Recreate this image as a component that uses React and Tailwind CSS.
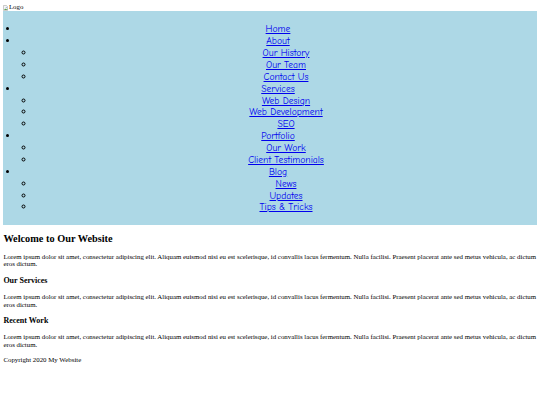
const menu = [
  { label: "Home" },
  { label: "About", children: ["Our History", "Our Team", "Contact Us"] },
  { label: "Services", children: ["Web Design", "Web Development", "SEO"] },
  { label: "Portfolio", children: ["Our Work", "Client Testimonials"] },
  { label: "Blog", children: ["News", "Updates", "Tips & Tricks"] },
];

const lorem =
  "Lorem ipsum dolor sit amet, consectetur adipiscing elit. Aliquam euismod nisi eu est scelerisque, id convallis lacus fermentum. Nulla facilisi. Praesent placerat ante sed metus vehicula, ac dictum eros dictum.";

// broken image placeholder, like the browser draws it
const BrokenLogo = () => (
  <span className="inline-flex items-end gap-[0.5px]">
    <svg width="5" height="6" viewBox="0 0 10 12" className="inline-block">
      <path d="M1 1h6l2 2v8H1z" fill="#f4f4f4" stroke="#9a9a9a" strokeWidth="1" />
      <path d="M2 10l2.5-3 2 2 1.5-1.5L9 10z" fill="#5a9e4b" />
      <circle cx="6.5" cy="4.5" r="1" fill="#4a8fd6" />
    </svg>
    <span>Logo</span>
  </span>
);

export default function App() {
  return (
    <div className="m-[3.4px] font-['Liberation_Serif','Times_New_Roman',serif] text-[6.85px] leading-[7.9px] text-black">
      <header className="h-[7.9px]">
        <BrokenLogo />
      </header>

      <nav className="bg-[#add8e6] pt-[5.6px] pb-[5px] text-center font-['Comic_Sans_MS','Comic_Neue',cursive] text-[9.6px] leading-[11.87px]">
        <ul className="my-[6.4px] list-disc pl-[16px]">
          {menu.map((item) => (
            <li key={item.label}>
              <a href="#" className="text-[#0000ee] underline">
                {item.label}
              </a>
              {item.children && (
                <ul className="list-[circle] pl-[16px]">
                  {item.children.map((c) => (
                    <li key={c}>
                      <a href="#" className="text-[#0000ee] underline">
                        {c}
                      </a>
                    </li>
                  ))}
                </ul>
              )}
            </li>
          ))}
        </ul>
      </nav>

      <main className="font-['Liberation_Serif','Times_New_Roman',serif]">
        <h2 className="my-[8px] text-[10.3px] font-bold leading-[11.9px]">Welcome to Our Website</h2>
        <p className="my-[6.4px]">{lorem}</p>
        <h3 className="my-[7.7px] text-[8px] font-bold leading-[9.2px]">Our Services</h3>
        <p className="my-[6.4px]">{lorem}</p>
        <h3 className="my-[7.7px] text-[8px] font-bold leading-[9.2px]">Recent Work</h3>
        <p className="my-[6.4px]">{lorem}</p>
      </main>

      <footer>
        <p className="my-[6.4px]">Copyright 2020 My Website</p>
      </footer>
    </div>
  );
}
